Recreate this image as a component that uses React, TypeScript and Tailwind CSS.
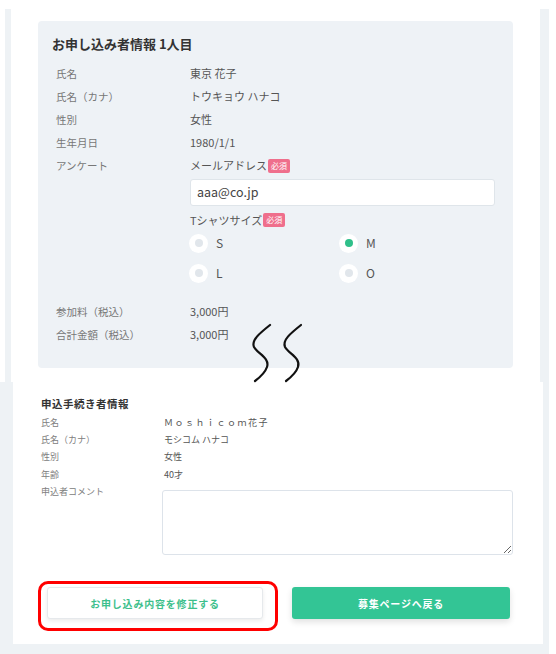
const FONT = "font-['Noto_Sans_CJK_JP','Noto_Sans',sans-serif]";

function Badge() {
  return (
    <span className="ml-[1px] inline-flex h-[14px] items-center rounded-[2px] bg-[#ef6f8c] px-[3px] text-[8px] leading-none text-white">
      必須
    </span>
  );
}

function Radio({ label, checked }: { label: string; checked?: boolean }) {
  return (
    <div className="flex h-[30px] w-[150px] items-center">
      <span className="flex h-[19px] w-[19px] items-center justify-center rounded-full bg-white">
        <span className={checked ? "h-[8px] w-[8px] rounded-full bg-[#2fbf8a]" : "h-[8px] w-[8px] rounded-full bg-[#e1e6eb]"} />
      </span>
      <span className="ml-[8px] text-[12px] text-[#555]">{label}</span>
    </div>
  );
}

function Row({ label, value }: { label: string; value: string }) {
  return (
    <div className="flex h-[23px] items-center">
      <div className="w-[134px] text-[10.5px] text-[#777]">{label}</div>
      <div className="text-[11px] text-[#555]">{value}</div>
    </div>
  );
}

function SmallRow({ label, value, wide }: { label: string; value: string; wide?: boolean }) {
  return (
    <div className="flex h-[17.25px] items-center">
      <div className="w-[123px] text-[9px] text-[#808080]">{label}</div>
      <div className={wide ? "text-[9px] tracking-[1.5px] text-[#555]" : "text-[9px] text-[#555]"}>{value}</div>
    </div>
  );
}

function Squiggle() {
  return (
    <svg className="absolute left-[234px] top-[311px]" width="70" height="66" viewBox="0 0 70 66" fill="none">
      <path d="M25 5 C15 13 6 20 9 27 C13 34 25 38 22 47 C20 53 14 58 10 61" stroke="#111" strokeWidth="2.2" strokeLinecap="round" />
      <path d="M56 5 C46 13 37 20 40 27 C44 34 56 38 53 47 C51 53 45 58 41 61" stroke="#111" strokeWidth="2.2" strokeLinecap="round" />
    </svg>
  );
}

export default function App() {
  return (
    <div className={`w-[556px] bg-white ${FONT}`}>
      {/* top capture */}
      <div className="flex h-[382px] bg-white pt-[9px]">
        <div className="w-[5px]" />
        <div className="w-[6px] bg-[#eef2f5]" />
        <div className="relative flex-1 bg-white px-[27px] pt-[12px]">
          <div className="h-[347px] rounded-[4px] bg-[#eef2f6] pl-[14px] pt-[13px]">
            <h2 className="text-[13px] font-bold leading-[20px] text-[#333]">お申し込み者情報 1人目</h2>
            <div className="mt-[8px] pl-[4px]">
              <Row label="氏名" value="東京 花子" />
              <Row label="氏名（カナ）" value="トウキョウ ハナコ" />
              <Row label="性別" value="女性" />
              <Row label="生年月日" value="1980/1/1" />
              <div className="flex">
                <div className="flex h-[23px] w-[134px] items-center text-[10.5px] text-[#777]">アンケート</div>
                <div className="flex flex-col">
                  <div className="flex h-[23px] items-center text-[11px] text-[#555]">
                    メールアドレス
                    <Badge />
                  </div>
                  <div className="mt-[2px] flex h-[27px] w-[305px] items-center rounded-[3px] border border-[#dfe5ea] bg-white pl-[6px] text-[12.5px] text-[#444]">
                    aaa@co.jp
                  </div>
                  <div className="mt-[3px] flex h-[22px] items-center text-[11px] text-[#555]">
                    Tシャツサイズ
                    <Badge />
                  </div>
                  <div className="-ml-[1px] -mt-[3px] grid grid-cols-[150px_150px]">
                    <Radio label="S" />
                    <Radio label="M" checked />
                    <Radio label="L" />
                    <Radio label="O" />
                  </div>
                </div>
              </div>
              <div className="mt-[12px]">
                <Row label="参加料（税込）" value="3,000円" />
                <Row label="合計金額（税込）" value="3,000円" />
              </div>
            </div>
          </div>
          <Squiggle />
        </div>
        <div className="w-[9px] bg-[#eef2f5]" />
        <div className="w-[7px]" />
      </div>

      {/* bottom capture */}
      <div className="flex h-[272px]">
        <div className="w-[13px] bg-[#eef2f5]" />
        <div className="flex w-[530px] flex-col bg-[#eef2f5]">
          <div className="h-[262px] bg-white pl-[28px] pt-[15px]">
            <h3 className="text-[10.5px] font-bold leading-[14px] tracking-[0.5px] text-[#333]">申込手続き者情報</h3>
            <div className="mt-[3px]">
              <SmallRow label="氏名" value="Ｍｏｓｈｉｃｏｍ花子" wide />
              <SmallRow label="氏名（カナ）" value="モシコム ハナコ" />
              <SmallRow label="性別" value="女性" />
              <SmallRow label="年齢" value="40才" />
              <div className="flex">
                <div className="flex h-[17.25px] w-[121px] items-center text-[9px] text-[#808080]">申込者コメント</div>
                <textarea
                  readOnly
                  className="mt-[7px] h-[65px] w-[351px] rounded-[3px] border border-[#dde3ea] bg-white outline-none"
                />
              </div>
            </div>
            <div className="-ml-[3px] mt-[26px] flex items-start">
              <div className="rounded-[10px] border-[3px] border-[#ff0000] pb-[9px] pl-[6px] pr-[12px] pt-[3px]">
                <button className="flex h-[32px] w-[216px] items-center justify-center rounded-[3px] border border-[#e6e9ec] bg-white text-[10px] font-bold tracking-[0.8px] text-[#3dbf8c] shadow-[0_2px_4px_rgba(0,0,0,0.08)]">
                  お申し込み内容を修正する
                </button>
              </div>
              <button className="ml-[14px] mt-[6px] flex h-[32px] w-[218px] items-center justify-center rounded-[3px] bg-[#33c595] text-[10px] font-bold tracking-[0.8px] text-white shadow-[0_3px_6px_rgba(0,0,0,0.12)]">
                募集ページへ戻る
              </button>
            </div>
          </div>
        </div>
        <div className="w-[6px] bg-[#eef2f5]" />
        <div className="w-[7px] bg-white" />
      </div>
    </div>
  );
}
